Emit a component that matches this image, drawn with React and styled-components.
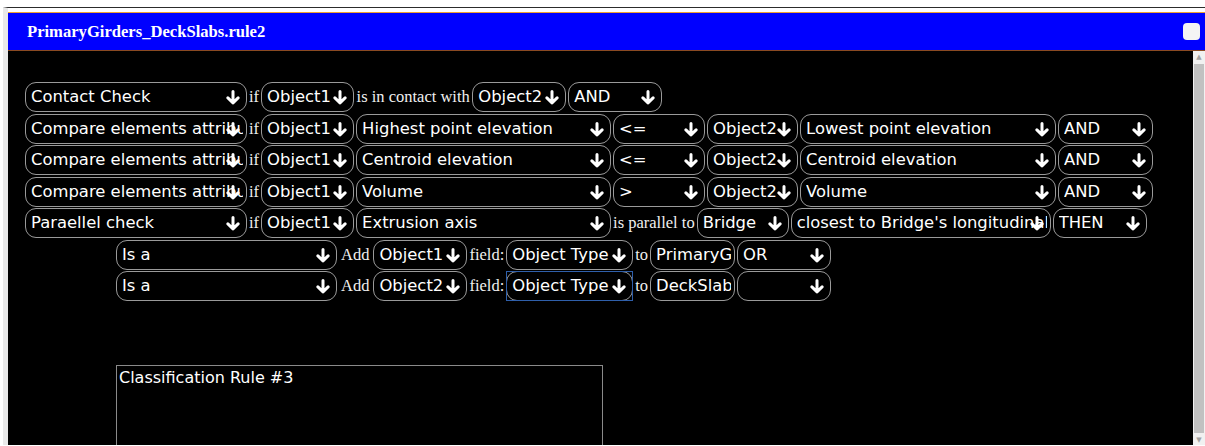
import React from 'react';
import styled, { createGlobalStyle } from 'styled-components';

const GlobalStyle = createGlobalStyle`
  html, body {
    margin: 0;
    padding: 0;
    background: #ffffff;
    overflow: hidden;
  }
`;

// each rule line: selects, free text inputs and the little connecting words
const ruleRows = [
  {
    indent: 0,
    items: [
      { kind: 'select', text: 'Contact Check', w: 222 },
      { kind: 'label', text: 'if' },
      { kind: 'select', text: 'Object1', w: 93 },
      { kind: 'label', text: 'is in contact with', pad: 0.5 },
      { kind: 'select', text: 'Object2', w: 94 },
      { kind: 'select', text: 'AND', w: 94 },
    ],
  },
  {
    indent: 0,
    items: [
      { kind: 'select', text: 'Compare elements attributes', w: 222 },
      { kind: 'label', text: 'if' },
      { kind: 'select', text: 'Object1', w: 93 },
      { kind: 'select', text: 'Highest point elevation', w: 255 },
      { kind: 'select', text: '<=', w: 92 },
      { kind: 'select', text: 'Object2', w: 91 },
      { kind: 'select', text: 'Lowest point elevation', w: 256 },
      { kind: 'select', text: 'AND', w: 95 },
    ],
  },
  {
    indent: 0,
    items: [
      { kind: 'select', text: 'Compare elements attributes', w: 222 },
      { kind: 'label', text: 'if' },
      { kind: 'select', text: 'Object1', w: 93 },
      { kind: 'select', text: 'Centroid elevation', w: 255 },
      { kind: 'select', text: '<=', w: 92 },
      { kind: 'select', text: 'Object2', w: 91 },
      { kind: 'select', text: 'Centroid elevation', w: 256 },
      { kind: 'select', text: 'AND', w: 95 },
    ],
  },
  {
    indent: 0,
    items: [
      { kind: 'select', text: 'Compare elements attributes', w: 222 },
      { kind: 'label', text: 'if' },
      { kind: 'select', text: 'Object1', w: 93 },
      { kind: 'select', text: 'Volume', w: 255 },
      { kind: 'select', text: '>', w: 92 },
      { kind: 'select', text: 'Object2', w: 91 },
      { kind: 'select', text: 'Volume', w: 256 },
      { kind: 'select', text: 'AND', w: 95 },
    ],
  },
  {
    indent: 0,
    items: [
      { kind: 'select', text: 'Paraellel check', w: 222 },
      { kind: 'label', text: 'if' },
      { kind: 'select', text: 'Object1', w: 93 },
      { kind: 'select', text: 'Extrusion axis', w: 255 },
      { kind: 'label', text: 'is parallel to' },
      { kind: 'select', text: 'Bridge', w: 92 },
      { kind: 'select', text: "closest to Bridge's longitudinal axis", w: 260 },
      { kind: 'select', text: 'THEN', w: 94 },
    ],
  },
  {
    indent: 91,
    items: [
      { kind: 'select', text: 'Is a', w: 221 },
      { kind: 'label', text: 'Add', pad: 2 },
      { kind: 'select', text: 'Object1', w: 94 },
      { kind: 'label', text: 'field:' },
      { kind: 'select', text: 'Object Type', w: 127 },
      { kind: 'label', text: 'to' },
      { kind: 'input', text: 'PrimaryGirder', w: 85 },
      { kind: 'select', text: 'OR', w: 94 },
    ],
  },
  {
    indent: 91,
    items: [
      { kind: 'select', text: 'Is a', w: 221 },
      { kind: 'label', text: 'Add', pad: 2 },
      { kind: 'select', text: 'Object2', w: 94 },
      { kind: 'label', text: 'field:' },
      { kind: 'select', text: 'Object Type', w: 127, focused: true },
      { kind: 'label', text: 'to' },
      { kind: 'input', text: 'DeckSlab', w: 85 },
      { kind: 'select', text: '', w: 94 },
    ],
  },
];

const DownArrow = () => (
  <svg width="14" height="15" viewBox="0 0 14 15">
    <path
      d="M7 1.6 V12.8 M1.9 7.9 L7 12.8 L12.1 7.9"
      fill="none"
      stroke="#ffffff"
      strokeWidth="3"
      strokeLinecap="round"
      strokeLinejoin="round"
    />
  </svg>
);

const RuleField = ({ item }) => {
  if (item.kind === 'label') return <Word $pad={item.pad || 0}>{item.text}</Word>;
  return (
    <Field $w={item.w} $focused={item.focused}>
      <FieldText>{item.text}</FieldText>
      {item.kind === 'select' && (
        <ArrowSlot>
          <DownArrow />
        </ArrowSlot>
      )}
    </Field>
  );
};

const App = () => {
  return (
    <>
      <GlobalStyle />
      <Frame>
        <Window>
          <TitleBar>
            <Title>PrimaryGirders_DeckSlabs.rule2</Title>
            <CloseBox />
          </TitleBar>
          <Body>
            <Editor>
              {ruleRows.map((row, i) => (
                <Row key={i} $indent={row.indent}>
                  {row.items.map((item, j) => (
                    <RuleField key={j} item={item} />
                  ))}
                </Row>
              ))}
              <Notes defaultValue="Classification Rule #3" />
            </Editor>
            <ScrollTrack>
              <ScrollArrow>▲</ScrollArrow>
              <ScrollThumb />
              <ScrollArrow>▼</ScrollArrow>
            </ScrollTrack>
          </Body>
        </Window>
      </Frame>
    </>
  );
};

const Frame = styled.div`
  margin: 7px 0 0 3px;
  border-top: 1px solid #2c2c2c;
  border-left: 5px solid #e9e9e9;
  padding-top: 4px;
  height: 438px;
  box-sizing: border-box;
`;

const Window = styled.div`
  border-top: 1px solid #f0a030;
  display: flex;
  flex-direction: column;
  height: 100%;
`;

const TitleBar = styled.div`
  height: 37px;
  background: #0000ff;
  border-bottom: 1px solid #8a4a22;
  display: flex;
  align-items: center;
  justify-content: space-between;
  padding: 0 5px 0 19px;
  flex-shrink: 0;
`;

const Title = styled.span`
  font-family: "Liberation Serif", serif;
  font-weight: bold;
  font-size: 16.6px;
  color: #ffffff;
`;

const CloseBox = styled.div`
  width: 17px;
  height: 17px;
  border-radius: 4px;
  background: #f4f4f4;
`;

const Body = styled.div`
  flex: 1;
  display: flex;
  background: #000000;
  min-height: 0;
`;

const Editor = styled.div`
  flex: 1;
  padding: 31px 0 0 17px;
  overflow: hidden;
`;

const Row = styled.div`
  height: 31.5px;
  display: flex;
  align-items: flex-start;
  gap: 2px;
  padding-left: ${(p) => p.$indent}px;
`;

const Field = styled.div`
  position: relative;
  width: ${(p) => p.$w}px;
  height: 30px;
  box-sizing: border-box;
  border: 1px solid #9a9a9a;
  border-radius: 11px;
  background: #000000;
  display: flex;
  align-items: center;
  padding: 0 3px 0 5px;
  flex-shrink: 0;

  &::after {
    content: '';
    display: ${(p) => (p.$focused ? 'block' : 'none')};
    position: absolute;
    inset: -1px;
    border: 1px solid #2f5faa;
    pointer-events: none;
  }
`;

const FieldText = styled.span`
  font-family: "DejaVu Sans", sans-serif;
  font-size: 16.4px;
  color: #ffffff;
  white-space: nowrap;
  overflow: hidden;
  flex: 1;
  line-height: 28px;
`;

const ArrowSlot = styled.span`
  position: absolute;
  right: 6px;
  top: 7px;
  display: flex;
`;

const Word = styled.span`
  font-family: "Liberation Serif", serif;
  font-size: 16.5px;
  color: #f0f0f0;
  line-height: 30px;
  padding: 0 ${(p) => p.$pad}px;
  white-space: nowrap;
  flex-shrink: 0;
`;

const Notes = styled.textarea`
  display: block;
  margin: 62px 0 0 91px;
  width: 487px;
  height: 120px;
  box-sizing: border-box;
  background: #000000;
  border: 1px solid #8a8a8a;
  color: #ffffff;
  font-family: "DejaVu Sans", sans-serif;
  font-size: 16px;
  padding: 2px;
  resize: none;
  outline: none;
`;

const ScrollTrack = styled.div`
  width: 12px;
  background: #f1f1f1;
  display: flex;
  flex-direction: column;
  align-items: center;
  flex-shrink: 0;
`;

const ScrollArrow = styled.div`
  height: 12px;
  font-size: 7px;
  line-height: 12px;
  color: #a3a3a3;
  font-family: "DejaVu Sans", sans-serif;
`;

const ScrollThumb = styled.div`
  flex: 1;
  width: 10px;
  background: #c1c1c1;
  margin: 1px 0;
`;

export default App;
